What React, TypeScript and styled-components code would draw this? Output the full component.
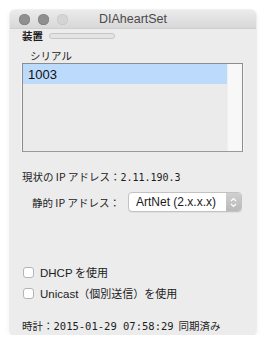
import React from "react";
import styled, { createGlobalStyle } from "styled-components";

const Global = createGlobalStyle`
  html, body { margin: 0; padding: 0; background: #ffffff; }
  body { font-family: "Noto Sans CJK JP", "Noto Sans", sans-serif; }
`;

const Window = styled.div`
  margin: 10px 10px 0 10px;
  width: 246px;
  height: 325px;
  background: #ececec;
  border-radius: 5px;
  box-shadow: 0 0 0 1px rgba(0,0,0,0.04), 0 2px 6px rgba(0,0,0,0.08);
  display: flex;
  flex-direction: column;
  overflow: hidden;
`;

const TitleBar = styled.div`
  height: 18px;
  flex: none;
  background: linear-gradient(#ebebeb, #d8d8d8);
  border-bottom: 1px solid #cfcfcf;
  display: flex;
  align-items: center;
  position: relative;
  padding-left: 9px;
  gap: 8px;
`;

const Light = styled.div<{ $dim?: boolean }>`
  width: 11px;
  height: 11px;
  border-radius: 50%;
  background: ${(p) => (p.$dim ? "#d4d4d4" : "#8f8f8f")};
  box-shadow: inset 0 0 0 0.5px ${(p) => (p.$dim ? "#c4c4c4" : "#7c7c7c")};
`;

const Title = styled.div`
  position: absolute;
  left: 0;
  right: 0;
  top: 0;
  bottom: 0;
  display: flex;
  align-items: center;
  justify-content: center;
  font-family: "Liberation Sans", Arial, sans-serif;
  font-size: 12.5px;
  color: #4a4a4a;
  pointer-events: none;
`;

const Body = styled.div`
  flex: 1;
  display: flex;
  flex-direction: column;
  padding: 0 13px 0 12px;
  color: #1c1c1c;
  font-size: 10.5px;
`;

const DeviceRow = styled.div`
  display: flex;
  align-items: center;
  gap: 6px;
  height: 12px;
  margin-top: 1px;
`;

const Label = styled.span<{ $bold?: boolean; $lead?: number }>`
  font-weight: ${(p) => (p.$bold ? 700 : 400)};
  white-space: nowrap;
  line-height: 1;
  margin-left: ${(p) => p.$lead ?? 0}px;
`;

const Progress = styled.div`
  width: 64px;
  height: 4px;
  border-radius: 3px;
  background: #e4e4e4;
  border: 1px solid #c6c6c6;
`;

const SerialLabel = styled.div`
  margin: 7px 0 0 8px;
  height: 13px;
  line-height: 13px;
`;

const ListBox = styled.div`
  margin-top: 1px;
  height: 87px;
  border: 1px solid #8c8c8c;
  border-bottom-color: #9a9a9a;
  background: #ebebeb;
  display: flex;
  box-shadow: -2px 0 0 -1px #f6f6f6, 2px 0 0 -1px #f6f6f6;
`;

const ListItems = styled.div`
  flex: 1;
  display: flex;
  flex-direction: column;
`;

const ListRow = styled.div<{ $selected?: boolean }>`
  height: 20px;
  display: flex;
  align-items: center;
  padding-left: 5px;
  background: ${(p) => (p.$selected ? "#bcdbfc" : "transparent")};
  font-family: "Liberation Sans", Arial, sans-serif;
  font-size: 13px;
  color: #111;
`;

const ScrollTrack = styled.div`
  width: 14px;
  background: #f8f8f8;
  border-left: 1px solid #efefef;
`;

const InfoLine = styled.div<{ $indent?: number; $top: number }>`
  display: flex;
  align-items: center;
  margin-top: ${(p) => p.$top}px;
  padding-left: ${(p) => p.$indent ?? 0}px;
  height: 14px;
  white-space: nowrap;
`;

const Mono = styled.span<{ $size?: number }>`
  font-family: "DejaVu Sans Mono", "Liberation Mono", monospace;
  font-size: ${(p) => p.$size ?? 10}px;
  color: #1c1c1c;
`;

const PopupRow = styled.div`
  display: flex;
  align-items: center;
  margin-top: 8px;
  padding-left: 10px;
  height: 20px;
`;

const PopupLabel = styled.span`
  width: 96px;
  white-space: nowrap;
`;

const Popup = styled.div`
  width: 112px;
  height: 18px;
  border: 1px solid #c2c2c2;
  border-radius: 4px;
  background: #ffffff;
  display: flex;
  align-items: center;
  box-shadow: 0 1px 0 rgba(0,0,0,0.05);
  overflow: hidden;
`;

const PopupText = styled.span`
  flex: 1;
  padding-left: 7px;
  font-family: "Liberation Sans", Arial, sans-serif;
  font-size: 12px;
  color: #1a1a1a;
`;

const Stepper = styled.div`
  width: 15px;
  height: 100%;
  background: linear-gradient(#d0d0d0, #b9b9b9);
  display: flex;
  align-items: center;
  justify-content: center;
`;

const CheckRow = styled.label<{ $top: number }>`
  display: flex;
  align-items: center;
  gap: 6px;
  margin-top: ${(p) => p.$top}px;
  padding-left: 1px;
  height: 14px;
`;

const Box = styled.span`
  width: 11px;
  height: 11px;
  border: 1px solid #b4b4b4;
  border-radius: 3px;
  background: #ffffff;
  box-sizing: border-box;
  flex: none;
`;

const CheckText = styled.span`
  font-size: 11px;
  white-space: nowrap;
`;

const Latin = styled.span`
  font-family: "Liberation Sans", Arial, sans-serif;
  font-size: 11.5px;
`;

export default function App() {
  return (
    <>
      <Global />
      <Window>
        <TitleBar>
          <Light />
          <Light />
          <Light $dim />
          <Title>DIAheartSet</Title>
        </TitleBar>
        <Body>
          <DeviceRow>
            <Label $bold>装置</Label>
            <Progress />
          </DeviceRow>
          <SerialLabel>シリアル</SerialLabel>
          <ListBox>
            <ListItems>
              <ListRow $selected>1003</ListRow>
            </ListItems>
            <ScrollTrack />
          </ListBox>
          <InfoLine $top={18}>
            <Label>現状の IP アドレス：</Label>
            <Mono>2.11.190.3</Mono>
          </InfoLine>
          <PopupRow>
            <PopupLabel>静的 IP アドレス：</PopupLabel>
            <Popup>
              <PopupText>ArtNet (2.x.x.x)</PopupText>
              <Stepper>
                <svg width="7" height="11" viewBox="0 0 7 11">
                  <path d="M1 4 L3.5 1.5 L6 4" fill="none" stroke="#fff" strokeWidth="1.2" />
                  <path d="M1 7 L3.5 9.5 L6 7" fill="none" stroke="#fff" strokeWidth="1.2" />
                </svg>
              </Stepper>
            </Popup>
          </PopupRow>
          <CheckRow $top={53}>
            <Box />
            <CheckText>
              <Latin>DHCP</Latin> を使用
            </CheckText>
          </CheckRow>
          <CheckRow $top={7}>
            <Box />
            <CheckText>
              <Latin>Unicast</Latin>（個別送信）を使用
            </CheckText>
          </CheckRow>
          <InfoLine $top={19}>
            <Label>時計：</Label>
            <Mono $size={10.5}>2015-01-29 07:58:29</Mono>
            <Label $lead={5}>同期済み</Label>
          </InfoLine>
        </Body>
      </Window>
    </>
  );
}
